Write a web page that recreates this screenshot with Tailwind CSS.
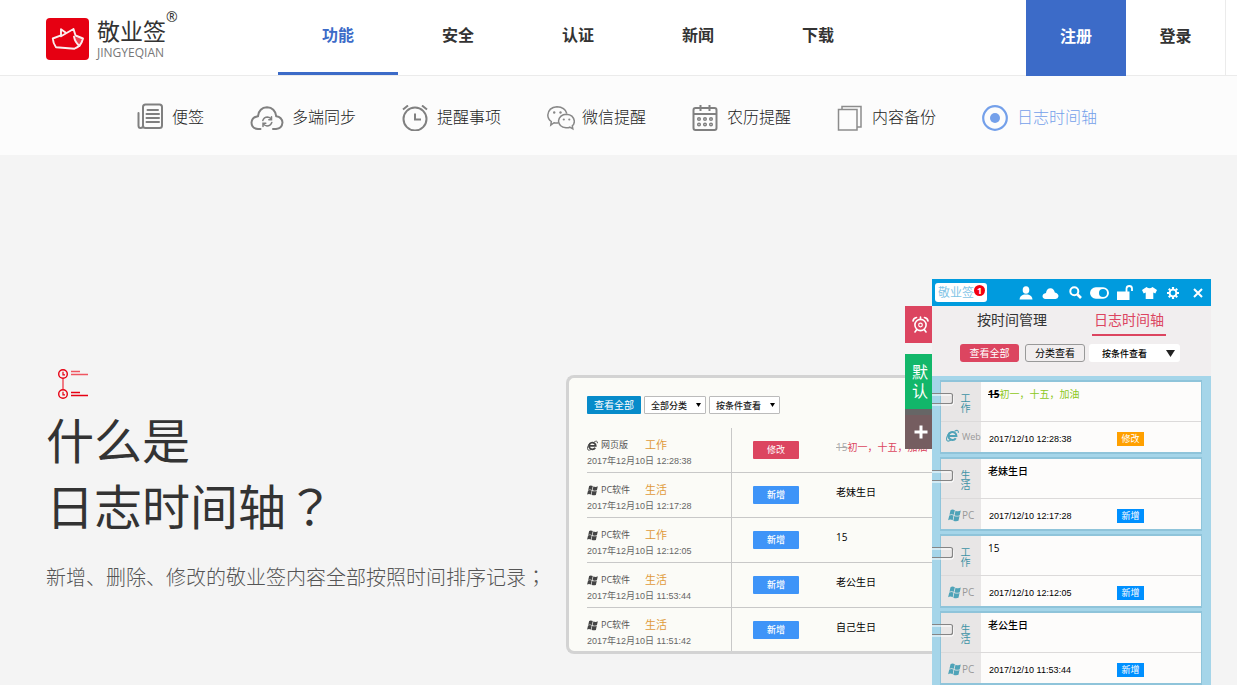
<!DOCTYPE html>
<html lang="zh-CN">
<head>
<meta charset="utf-8">
<meta name="viewport" content="width=device-width, initial-scale=1">
<title>敬业签 - 日志时间轴</title>
<script src="https://cdn.jsdelivr.net/npm/@tailwindcss/browser@4"></script>
</head>
<body class="h-screen overflow-hidden bg-[#f4f4f4] text-[#333] font-['Open_Sans','Noto_Sans_CJK_SC',sans-serif]">

<svg class="hidden" aria-hidden="true">
  <symbol id="win" viewBox="0 1 11.400 10.200">
    <path fill="currentColor" d="M2.200 1.400Q4 .4 6 1.500L5.100 5.500Q3.200 4.500 1.300 5.500ZM6.600 1.900Q8.900 2.900 11.200 1.800L10.300 5.900Q8 6.900 5.700 5.900ZM1.100 6.100Q3 5.100 4.900 6.100L4.100 10.200Q2 9.200 .1 10.200ZM5.500 6.500Q7.900 7.500 10.100 6.500L9.200 10.700Q7 11.600 4.700 10.600Z"/>
  </symbol>
  <symbol id="ie" viewBox="0 0 12 12">
    <path fill="none" stroke="currentColor" stroke-width="1.900" d="M3 6.500H9.600A3.700 3.700 0 1 0 9 8.500"/>
    <path fill="none" stroke="currentColor" stroke-width="1" d="M3.400 3.200C.8 6 -.2 9.500 1.100 10.800C2 11.600 3.800 10.700 4.800 10M7.800 2.200C10 .8 11.800 .9 11.300 3.500"/>
  </symbol>
  <symbol id="clip" viewBox="0 0 22 14">
    <path fill="none" stroke="#fff" stroke-width="1" d="M0 3H19.500Q21.500 3 21.500 5V10.500Q21.500 13 19.500 13H0"/>
    <path fill="none" stroke="#858585" stroke-width="1.200" d="M0 1.500H18.500Q20.500 1.500 20.500 3.500V9.500Q20.500 11.500 18.500 11.500H0"/>
  </symbol>
</svg>

<header class="relative z-10 flex h-[76px] items-start border-b border-[#ebebeb] bg-white pl-[46px] pr-[11px]">
  <a href="#" class="mt-[18px] flex w-[232px] shrink-0" aria-label="敬业签">
    <svg class="size-[43px]" viewBox="0 0 43 43">
      <rect width="43" height="42" rx="4" fill="#e60012"/>
      <path d="M28 18.700L36.500 20.300Q37.500 24.500 34 28Q29.500 25 28 18.700Z" fill="#fbe9e9" fill-opacity=".3"/>
      <g fill="none" stroke="#fbeeee" stroke-width="1.900" stroke-linejoin="round" stroke-linecap="round">
        <path d="M15 17.300L6.800 20.500Q7 25 10 29.300L28.500 30.700Q35 28.500 37 20.500L29.500 17.500L27.500 11L15 18.300"/>
        <path d="M15 17.300V11.300L19.500 14.500"/>
        <path d="M28 18.700Q29 24.500 33.500 28"/>
      </g>
    </svg>
    <span class="ml-2 flex flex-col">
      <span class="flex">
        <span class="text-[23px] leading-[26px]">敬业签</span>
        <sup class="top-[-8px] text-sm leading-[14px]">®</sup>
      </span>
      <span class="text-xs leading-[18px] text-[#777]">JINGYEQIAN</span>
    </span>
  </a>
  <nav class="flex text-base font-bold leading-[70px]">
    <a href="#" class="h-[75px] w-[120px] border-b-3 border-[#3c6bc8] text-center text-[#3c6bc8]">功能</a>
    <a href="#" class="h-[75px] w-[120px] text-center">安全</a>
    <a href="#" class="h-[75px] w-[120px] text-center">认证</a>
    <a href="#" class="h-[75px] w-[120px] text-center">新闻</a>
    <a href="#" class="h-[75px] w-[120px] text-center">下载</a>
  </nav>
  <div class="ml-auto flex text-base font-bold leading-[72px]">
    <a href="#" class="h-[76px] w-[100px] bg-[#3c6bc8] text-center text-white">注册</a>
    <a href="#" class="h-[75px] w-[100px] border-r border-[#ebebeb] text-center">登录</a>
  </div>
</header>

<nav class="flex h-[79px] items-center justify-center gap-[46px] bg-[#fcfcfc] pr-[3px] text-base leading-[26px] font-light text-[#222] [&>a]:pt-1">
  <a href="#" class="flex items-center gap-[9px]">
    <svg class="mb-1 size-[26px]" viewBox="0 0 26 26" fill="none" stroke="#808080" stroke-width="2">
      <rect x="6" y="1.500" width="19" height="23.500" rx="2.500"/>
      <path d="M6 22.500Q6 25 3.500 25Q1.500 25 1.500 22.500V10" stroke-linecap="round"/>
      <path d="M10.500 7H21M9.500 11H22M9.500 15H22M9.500 19H22" stroke-linecap="round"/>
    </svg><span class="pb-0.5">便签</span></a>
  <a href="#" class="flex items-center gap-2">
    <svg class="h-[26px] w-[34px]" viewBox="0 0 34 26" fill="none" stroke="#808080" stroke-width="2" stroke-linecap="round">
      <path d="M10.500 24H8Q1.500 23.500 1.500 17.500Q2 12 8 11.200Q9 2.500 17 2.200Q25 2.500 26.200 11.200Q32 12 32.500 17.500Q32 23.500 26 24H23"/>
      <path stroke-width="1.500" d="M12.800 15.500Q14 12 17.500 12Q20 12.200 21.300 14.300M21.500 11.800V14.800H18.800M21.800 17.500Q20.500 21 17 21Q14.500 20.800 13.200 18.700M13 21.500V18.300H15.800"/>
    </svg><span class="pb-0.5">多端同步</span></a>
  <a href="#" class="flex items-center gap-[9px]">
    <svg class="size-[26px]" viewBox="0 0 26 26" fill="none" stroke="#808080" stroke-width="2">
      <circle cx="13" cy="14" r="11.500"/>
      <path d="M13 8.500V14.500H19M1 4.500L6 .5M20 .5L25 4.500"/>
    </svg><span class="pb-0.5">提醒事项</span></a>
  <a href="#" class="flex items-center gap-[7px]">
    <svg class="h-[26px] w-[28px]" viewBox="0 0 28 26" fill="none" stroke="#888" stroke-width="1.500">
      <path d="M11.500 17.800Q9 18.300 7 17.700L3.800 20L4.300 16.500Q.8 14 .8 10Q1.500 2.500 10 1.800Q18 2 19.800 8.500"/>
      <path d="M25.300 20.800Q27.500 18.800 27.300 16Q26.500 9.800 19.500 9.200Q12.500 9.500 11.500 16Q12 22.200 19 22.800Q21 23 22.800 22.200L25.800 23.800Z"/>
      <g fill="#888" stroke="none"><circle cx="7.200" cy="7.500" r="1.200"/><circle cx="13.500" cy="7.500" r="1.200"/><circle cx="16.800" cy="14.500" r="1.100"/><circle cx="22.300" cy="14.500" r="1.100"/></g>
    </svg><span class="pb-0.5">微信提醒</span></a>
  <a href="#" class="flex items-center gap-[9px]">
    <svg class="size-[26px]" viewBox="0 0 26 26" fill="none" stroke="#808080" stroke-width="2">
      <rect x="1.500" y="3" width="23" height="22" rx="2"/>
      <path d="M1.500 9H24.500M8.500 0V6M17.500 0V6"/>
      <g stroke-width="1.500"><circle cx="7" cy="14" r="1.300"/><circle cx="13" cy="14" r="1.300"/><circle cx="19" cy="14" r="1.300"/><circle cx="7" cy="19.500" r="1.300"/><circle cx="13" cy="19.500" r="1.300"/><circle cx="19" cy="19.500" r="1.300"/></g>
    </svg><span class="pb-0.5">农历提醒</span></a>
  <a href="#" class="flex items-center gap-[9px]">
    <svg class="size-[26px]" viewBox="0 0 26 26" fill="none" stroke="#8c8c8c" stroke-width="1.500">
      <rect x="1.500" y="4.500" width="18.500" height="20.500"/>
      <path d="M5 4V1.500H24V22H20"/>
    </svg><span class="pb-0.5">内容备份</span></a>
  <a href="#" class="flex items-center gap-[9px] text-[#74a0ea]">
    <svg class="size-[26px]" viewBox="0 0 26 26">
      <circle cx="13" cy="13" r="11.800" fill="none" stroke="#74a0ea" stroke-width="2.200"/>
      <circle cx="13" cy="13" r="5" fill="#74a0ea"/>
    </svg><span class="pb-0.5">日志时间轴</span></a>
</nav>

<main class="flex items-start pl-[46px] pr-[26px]">
  <section class="min-w-0 flex-1 pt-[214px]">
    <svg class="ml-[11px] size-8" viewBox="0 0 32 32" fill="none" stroke="#e60012">
      <path stroke="#ef5560" stroke-width="1.500" d="M6 9.500V20"/>
      <circle cx="6" cy="5" r="4.300" stroke-width="1.400"/><circle cx="6" cy="25" r="4.300" stroke-width="1.400"/>
      <path stroke-width="1.200" d="M6 2.800V5.800H8M6 22.800V25.800H8"/>
      <path stroke="#ef5560" stroke-width="1.500" d="M14 2.500H23M14 5.500H31"/>
      <path stroke-width="1.500" d="M14 23.500H23M14 26.500H31"/>
    </svg>
    <h1 class="mt-[7px] text-5xl leading-[66px]">什么是<br>日志时间轴<span lang="zh-TW" class="font-['Open_Sans','Noto_Sans_CJK_TC',sans-serif]">？</span></h1>
    <p class="mt-[23px] whitespace-nowrap text-xl leading-[30px] font-light text-[#555]">新增、删除、修改的敬业签内容全部按照时间排序记录<span lang="zh-TW" class="font-['Open_Sans','Noto_Sans_CJK_TC',sans-serif]">；</span></p>
  </section>

  <section class="mt-[220px] w-[366px] shrink-0 rounded-l-lg border-3 border-r-0 border-[#d3d3d3] bg-[#fbfbf7] pl-[18px] pt-[18px]">
    <div class="flex gap-[3px] text-[9px] text-[#222]">
      <button class="h-[18px] w-[54px] rounded-[1px] bg-[#078bca] text-[10px] leading-[18px] text-white">查看全部</button>
      <label class="relative">
        <select aria-label="分类" class="block h-[18px] w-[62px] appearance-none rounded-[1px] border border-[#bbb] bg-white pl-[6px] pt-px font-medium"><option>全部分类</option></select>
        <svg class="pointer-events-none absolute right-[5px] top-[7px] h-1 w-[5px]" viewBox="0 0 5 4"><path d="M0 0H5L2.500 4Z"/></svg>
      </label>
      <label class="relative">
        <select aria-label="条件" class="block h-[18px] w-[71px] appearance-none rounded-[1px] border border-[#bbb] bg-white pl-[6px] pt-px font-medium"><option>按条件查看</option></select>
        <svg class="pointer-events-none absolute right-[5px] top-[7px] h-1 w-[5px]" viewBox="0 0 5 4"><path d="M0 0H5L2.500 4Z"/></svg>
      </label>
    </div>
    <table class="mt-[14px] w-full table-fixed border-separate border-spacing-0 text-[10px] leading-[14px] [&_td]:border-[#c8c8c8] [&_td]:p-0 [&_td]:align-top">
      <colgroup><col class="w-[145px]"><col class="w-[104px]"><col></colgroup>
      <tbody>
        <tr class="h-[45px]">
          <td class="border-r border-b"><div class="mt-[10px] flex items-center"><svg class="size-[11px] text-[#444]"><use href="#ie"/></svg><span class="ml-[3px] w-11 text-[9px] text-[#555]">网页版</span><span class="text-[11px] text-[#e09a3a]">工作</span></div><div class="mt-[2px] text-[9px] text-[#666] font-['Liberation_Sans','Noto_Sans_CJK_SC',sans-serif]">2017年12月10日 12:28:38</div></td>
          <td class="border-b"><button class="ml-[21px] mt-[13px] block h-[18px] w-[46px] rounded-[1px] bg-[#dc4560] text-[9px] text-white">修改</button></td>
          <td class="border-b"><div class="mt-3 whitespace-nowrap text-[#dc4560]"><s class="text-[#aaa]">15</s>初一，十五，加油</div></td>
        </tr>
        <tr class="h-[45px]">
          <td class="border-r border-b"><div class="mt-[10px] flex items-center"><svg class="size-[11px] text-[#444]"><use href="#win"/></svg><span class="ml-[3px] w-11 text-[9px] text-[#555]">PC软件</span><span class="text-[11px] text-[#e09a3a]">生活</span></div><div class="mt-[2px] text-[9px] text-[#666] font-['Liberation_Sans','Noto_Sans_CJK_SC',sans-serif]">2017年12月10日 12:17:28</div></td>
          <td class="border-b"><button class="ml-[21px] mt-[13px] block h-[18px] w-[46px] rounded-[1px] bg-[#3e94f8] text-[9px] font-medium text-white">新增</button></td>
          <td class="border-b"><div class="mt-3 text-black">老妹生日</div></td>
        </tr>
        <tr class="h-[45px]">
          <td class="border-r border-b"><div class="mt-[10px] flex items-center"><svg class="size-[11px] text-[#444]"><use href="#win"/></svg><span class="ml-[3px] w-11 text-[9px] text-[#555]">PC软件</span><span class="text-[11px] text-[#e09a3a]">工作</span></div><div class="mt-[2px] text-[9px] text-[#666] font-['Liberation_Sans','Noto_Sans_CJK_SC',sans-serif]">2017年12月10日 12:12:05</div></td>
          <td class="border-b"><button class="ml-[21px] mt-[13px] block h-[18px] w-[46px] rounded-[1px] bg-[#3e94f8] text-[9px] font-medium text-white">新增</button></td>
          <td class="border-b"><div class="mt-3 text-black">15</div></td>
        </tr>
        <tr class="h-[45px]">
          <td class="border-r border-b"><div class="mt-[10px] flex items-center"><svg class="size-[11px] text-[#444]"><use href="#win"/></svg><span class="ml-[3px] w-11 text-[9px] text-[#555]">PC软件</span><span class="text-[11px] text-[#e09a3a]">生活</span></div><div class="mt-[2px] text-[9px] text-[#666] font-['Liberation_Sans','Noto_Sans_CJK_SC',sans-serif]">2017年12月10日 11:53:44</div></td>
          <td class="border-b"><button class="ml-[21px] mt-[13px] block h-[18px] w-[46px] rounded-[1px] bg-[#3e94f8] text-[9px] font-medium text-white">新增</button></td>
          <td class="border-b"><div class="mt-3 text-black">老公生日</div></td>
        </tr>
        <tr class="h-[43px]">
          <td class="border-r"><div class="mt-[10px] flex items-center"><svg class="size-[11px] text-[#444]"><use href="#win"/></svg><span class="ml-[3px] w-11 text-[9px] text-[#555]">PC软件</span><span class="text-[11px] text-[#e09a3a]">生活</span></div><div class="mt-[2px] text-[9px] text-[#666] font-['Liberation_Sans','Noto_Sans_CJK_SC',sans-serif]">2017年12月10日 11:51:42</div></td>
          <td><button class="ml-[21px] mt-[13px] block h-[18px] w-[46px] rounded-[1px] bg-[#3e94f8] text-[9px] font-medium text-white">新增</button></td>
          <td><div class="mt-3 text-black">自己生日</div></td>
        </tr>
      </tbody>
    </table>
  </section>

  <section class="relative mt-[124px] w-[279px] shrink-0 bg-[#a5d5e9]">
    <!-- side tabs hanging off the window's left edge -->
    <div class="absolute right-full top-[27px] w-[27px] text-white">
      <button aria-label="提醒" class="flex h-[37px] w-full items-center justify-center bg-[#dc4560] pl-1">
        <svg class="size-[17px]" viewBox="0 0 17 17" fill="none" stroke="#fff" stroke-width="1.600" stroke-linecap="round"><circle cx="8.500" cy="9" r="5.600"/><circle cx="8.500" cy="9" r="1.800" stroke-width="1.200"/><path d="M4.800 13.500L3 16M12.200 13.500L14 16M1 5Q1.500 2 4.500 1.500M16 5Q15.500 2 12.500 1.500M8.500 1V3"/></svg>
      </button>
      <button class="mt-[11px] block h-[55px] w-full bg-[#12b76a] pl-[7px] text-left text-base leading-[19px]">默<br>认</button>
      <button aria-label="添加" class="flex h-10 w-full items-center justify-center border-t-6 border-[#666] bg-[#755d60] pl-1">
        <svg class="size-[14px]" viewBox="0 0 14 14"><path d="M7 .5V13.500M.5 7H13.500" stroke="#fff" stroke-width="3"/></svg>
      </button>
    </div>

    <div class="flex h-[27px] items-center bg-[#009bde] pl-[3px] pr-px">
      <div class="relative h-[19px] w-[52px] rounded-[3px] bg-white pl-[3px] text-xs leading-[20px] text-[#7fc4e6]">敬业签
        <span class="absolute right-[2px] top-[2px] size-[11px] rounded-full bg-[#f30010] text-center text-[9px] leading-[11px] font-bold text-white">1</span>
      </div>
      <div class="ml-auto flex items-center text-white">
        <button aria-label="账户" class="flex w-[25px] justify-center"><svg class="h-[14px] w-[14px]" viewBox="0 0 14 14" fill="#fff"><ellipse cx="7" cy="4" rx="3.300" ry="3.800"/><path d="M.5 13.500Q.8 9.500 5 8.500H9Q13.200 9.500 13.500 13.500Z"/></svg></button>
        <button aria-label="云同步" class="flex w-[25px] justify-center"><svg class="mt-[2px] h-[11px] w-[17px]" viewBox="0 0 17 11" fill="#fff"><path d="M3.500 11Q.5 10.500 .5 8Q.8 5.500 4 5Q4.500 .5 8.500 .3Q12 .5 12.800 4.500Q16.500 5.500 16.500 8.200Q16 10.800 13.500 11Z"/></svg></button>
        <button aria-label="搜索" class="flex w-6 justify-center"><svg class="size-[13px]" viewBox="0 0 13 13" fill="none" stroke="#fff"><circle cx="5.300" cy="5.300" r="4" stroke-width="2"/><path stroke-width="2.600" d="M8.500 8.500L12 12"/></svg></button>
        <button aria-label="开关" class="flex w-[25px] justify-center"><svg class="h-3 w-[19px]" viewBox="0 0 19 12"><rect x=".8" y="1" width="17.400" height="10" rx="5" fill="#fff" stroke="#fff" stroke-width="1.500"/><circle cx="13" cy="6" r="4" fill="#009bde"/></svg></button>
        <button aria-label="锁定" class="flex w-[25px] justify-center"><svg class="h-[15px] w-4" viewBox="0 0 16 15"><path fill="#fff" d="M0 6.500H12.500V15H0Z"/><path fill="none" stroke="#fff" stroke-width="1.800" d="M9.500 7V3.500Q9.800 1 12.200 1Q15 1 15 3.500V6"/></svg></button>
        <button aria-label="皮肤" class="flex w-6 justify-center"><svg class="h-3 w-[15px]" viewBox="0 0 15 12" fill="#fff"><path d="M4.500 0Q7.500 2.500 10.500 0L15 3L13.300 6.500L11.300 5.500V12H3.700V5.500L1.700 6.500L0 3Z"/></svg></button>
        <button aria-label="设置" class="flex w-6 justify-center"><svg class="size-3" viewBox="0 0 12 12" fill="none" stroke="#fff"><circle cx="6" cy="6" r="3.400" stroke-width="1.900"/><path stroke-width="2.200" d="M6 0V2M6 10V12M0 6H2M10 6H12M1.800 1.800L3.200 3.200M8.800 8.800L10.200 10.200M1.800 10.200L3.200 8.800M8.800 3.200L10.200 1.800"/></svg></button>
        <button aria-label="关闭" class="flex w-[25px] justify-center"><svg class="size-[10px]" viewBox="0 0 10 10"><path stroke="#fff" stroke-width="2" d="M1 1L9 9M9 1L1 9"/></svg></button>
      </div>
    </div>

    <div class="h-[70px] bg-[#f1eeef]">
      <div class="flex justify-between pl-[45px] pr-[45px] text-sm leading-[28px]">
        <a href="#">按时间管理</a>
        <a href="#" class="h-[30px] border-b-2 border-[#dc4560] px-[2px] text-[#dc4560]">日志时间轴</a>
      </div>
      <div class="mt-2 flex pl-7 text-[10px]">
        <button class="h-[18px] w-[59px] rounded-[3px] bg-[#dc4560] pt-px text-white">查看全部</button>
        <button class="ml-[6px] h-[18px] w-[60px] rounded-[3px] border border-[#999] text-black">分类查看</button>
        <label class="relative ml-1">
          <select aria-label="查看条件" class="block h-[18px] w-[91px] appearance-none rounded-[3px] bg-white pl-[13px] pt-px text-[9px] font-medium text-black"><option>按条件查看</option></select>
          <svg class="pointer-events-none absolute right-[5px] top-[6px] h-[7px] w-[9px]" viewBox="0 0 9 7"><path fill="#222" d="M0 0H9L4.500 7Z"/></svg>
        </label>
      </div>
    </div>

    <div class="flex flex-col gap-[3px] py-1 pl-2 pr-[9px] text-[10px] leading-[14px]">
      <article class="relative flex h-[74px] border-2 border-x-1 border-[#8fc4da] bg-[#fdfcfb]">
        <svg class="absolute -left-[9px] top-[10px] h-[14px] w-[22px]"><use href="#clip"/></svg>
        <div class="flex w-10 flex-col bg-[#e8e6e6]">
          <div class="h-10 border-b border-[#dcdada] pl-4 pt-[11px] text-[#3f93a5]"><span class="block w-4 leading-4 [writing-mode:vertical-rl]">工作</span></div>
          <div class="flex items-center pl-[5px] pt-1 text-[9px] text-[#999]"><svg class="size-[13px] text-[#4fa3b8]"><use href="#ie"/></svg><span class="ml-[3px] mt-1">Web</span></div>
        </div>
        <div class="flex-1">
          <div class="h-10 border-b border-[#dcdada] pl-[7px] pt-[5px] text-[#8cc820]"><s class="font-bold text-black">15</s>初一，十五，加油</div>
          <div class="flex h-[30px] items-center pl-2 pt-1 text-[9px]"><time class="w-32 text-black font-['Liberation_Sans',sans-serif]">2017/12/10 12:28:38</time><span class="h-[14px] w-[27px] bg-[#ffa000] text-center text-white">修改</span></div>
        </div>
      </article>
      <article class="relative flex h-[74px] border-2 border-x-1 border-[#8fc4da] bg-[#fdfcfb]">
        <svg class="absolute -left-[9px] top-[10px] h-[14px] w-[22px]"><use href="#clip"/></svg>
        <div class="flex w-10 flex-col bg-[#e8e6e6]">
          <div class="h-10 border-b border-[#dcdada] pl-4 pt-[11px] text-[#3f93a5]"><span class="block w-4 leading-4 [writing-mode:vertical-rl]">生活</span></div>
          <div class="flex items-center pl-[7px] pt-[9px] text-[#999]"><svg class="size-[13px] text-[#4fa3b8]"><use href="#win"/></svg><span class="ml-px">PC</span></div>
        </div>
        <div class="flex-1">
          <div class="h-10 border-b border-[#dcdada] pl-[7px] pt-[5px] font-medium text-black">老妹生日</div>
          <div class="flex h-[30px] items-center pl-2 pt-1 text-[9px]"><time class="w-32 text-black font-['Liberation_Sans',sans-serif]">2017/12/10 12:17:28</time><span class="h-[14px] w-[27px] bg-[#0090ff] text-center text-white">新增</span></div>
        </div>
      </article>
      <article class="relative flex h-[74px] border-2 border-x-1 border-[#8fc4da] bg-[#fdfcfb]">
        <svg class="absolute -left-[9px] top-[10px] h-[14px] w-[22px]"><use href="#clip"/></svg>
        <div class="flex w-10 flex-col bg-[#e8e6e6]">
          <div class="h-10 border-b border-[#dcdada] pl-4 pt-[11px] text-[#3f93a5]"><span class="block w-4 leading-4 [writing-mode:vertical-rl]">工作</span></div>
          <div class="flex items-center pl-[7px] pt-[9px] text-[#999]"><svg class="size-[13px] text-[#4fa3b8]"><use href="#win"/></svg><span class="ml-px">PC</span></div>
        </div>
        <div class="flex-1">
          <div class="h-10 border-b border-[#dcdada] pl-[7px] pt-[5px] font-medium text-black">15</div>
          <div class="flex h-[30px] items-center pl-2 pt-1 text-[9px]"><time class="w-32 text-black font-['Liberation_Sans',sans-serif]">2017/12/10 12:12:05</time><span class="h-[14px] w-[27px] bg-[#0090ff] text-center text-white">新增</span></div>
        </div>
      </article>
      <article class="relative flex h-[74px] border-2 border-x-1 border-[#8fc4da] bg-[#fdfcfb]">
        <svg class="absolute -left-[9px] top-[10px] h-[14px] w-[22px]"><use href="#clip"/></svg>
        <div class="flex w-10 flex-col bg-[#e8e6e6]">
          <div class="h-10 border-b border-[#dcdada] pl-4 pt-[11px] text-[#3f93a5]"><span class="block w-4 leading-4 [writing-mode:vertical-rl]">生活</span></div>
          <div class="flex items-center pl-[7px] pt-[9px] text-[#999]"><svg class="size-[13px] text-[#4fa3b8]"><use href="#win"/></svg><span class="ml-px">PC</span></div>
        </div>
        <div class="flex-1">
          <div class="h-10 border-b border-[#dcdada] pl-[7px] pt-[5px] font-medium text-black">老公生日</div>
          <div class="flex h-[30px] items-center pl-2 pt-1 text-[9px]"><time class="w-32 text-black font-['Liberation_Sans',sans-serif]">2017/12/10 11:53:44</time><span class="h-[14px] w-[27px] bg-[#0090ff] text-center text-white">新增</span></div>
        </div>
      </article>
    </div>
  </section>
</main>
</body>
</html>
